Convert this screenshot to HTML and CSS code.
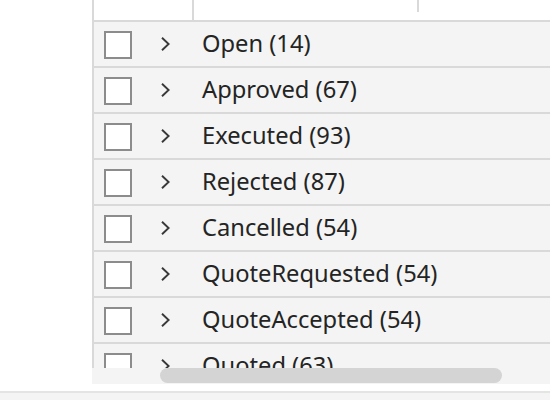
FILE: index.html
```html
<!DOCTYPE html>
<html>
<head>
<meta charset="utf-8">
<link rel="stylesheet" href="styles.css">
</head>
<body>
<div class="page">
  <div class="grid">
    <div class="header">
      <div class="hcell hcell-first"></div>
      <div class="hcell hcell-second"></div>
      <div class="hcell hcell-rest"></div>
    </div>
    <div class="body">
      <div class="row"><span class="check"></span><span class="chev"><svg width="11" height="14" viewBox="0 0 11 14"><path d="M2 0.8 L8.6 7 L2 13.2" fill="none" stroke="#383838" stroke-width="1.9"/></svg></span><span class="label">Open (14)</span></div>
      <div class="row"><span class="check"></span><span class="chev"><svg width="11" height="14" viewBox="0 0 11 14"><path d="M2 0.8 L8.6 7 L2 13.2" fill="none" stroke="#383838" stroke-width="1.9"/></svg></span><span class="label">Approved (67)</span></div>
      <div class="row"><span class="check"></span><span class="chev"><svg width="11" height="14" viewBox="0 0 11 14"><path d="M2 0.8 L8.6 7 L2 13.2" fill="none" stroke="#383838" stroke-width="1.9"/></svg></span><span class="label">Executed (93)</span></div>
      <div class="row"><span class="check"></span><span class="chev"><svg width="11" height="14" viewBox="0 0 11 14"><path d="M2 0.8 L8.6 7 L2 13.2" fill="none" stroke="#383838" stroke-width="1.9"/></svg></span><span class="label">Rejected (87)</span></div>
      <div class="row"><span class="check"></span><span class="chev"><svg width="11" height="14" viewBox="0 0 11 14"><path d="M2 0.8 L8.6 7 L2 13.2" fill="none" stroke="#383838" stroke-width="1.9"/></svg></span><span class="label">Cancelled (54)</span></div>
      <div class="row"><span class="check"></span><span class="chev"><svg width="11" height="14" viewBox="0 0 11 14"><path d="M2 0.8 L8.6 7 L2 13.2" fill="none" stroke="#383838" stroke-width="1.9"/></svg></span><span class="label">QuoteRequested (54)</span></div>
      <div class="row"><span class="check"></span><span class="chev"><svg width="11" height="14" viewBox="0 0 11 14"><path d="M2 0.8 L8.6 7 L2 13.2" fill="none" stroke="#383838" stroke-width="1.9"/></svg></span><span class="label">QuoteAccepted (54)</span></div>
      <div class="row"><span class="check"></span><span class="chev"><svg width="11" height="14" viewBox="0 0 11 14"><path d="M2 0.8 L8.6 7 L2 13.2" fill="none" stroke="#383838" stroke-width="1.9"/></svg></span><span class="label">Quoted (63)</span></div>
    </div>
  </div>
  <div class="hscroll"><div class="thumb"></div></div>
</div>
<div class="gap"></div>
<div class="footer"></div>
</body>
</html>
```
FILE: styles.css
```css
html, body {
  margin: 0;
  padding: 0;
  background: #ffffff;
  font-family: "Noto Sans", "Open Sans", sans-serif;
  color: #242424;
  overflow: hidden;
}
.page {
  margin-left: 92px;
  width: 458px;
}
.grid {
  border-left: 2px solid #d9d9d9;
}
.header {
  display: flex;
  height: 20px;
  background: #ffffff;
  border-bottom: 2px solid #d9d9d9;
}
.hcell-first {
  width: 98px;
  border-right: 2px solid #d9d9d9;
}
.hcell-second {
  width: 223px;
  height: 12px;
  border-right: 2px solid #d9d9d9;
}
.body {
  height: 346px;
  overflow: hidden;
  background: #f3f4f3;
}
.row {
  display: flex;
  align-items: center;
  height: 44px;
  border-bottom: 2px solid #d9d9d9;
  padding-left: 10px;
  background: #f3f4f3;
}
.check {
  box-sizing: border-box;
  width: 28px;
  height: 28px;
  border: 2px solid #8c8c8c;
  background: #ffffff;
  margin-top: 2px;
}
.chev {
  display: flex;
  align-items: center;
  width: 70px;
  padding-left: 28px;
  box-sizing: border-box;
  margin-top: -1px;
}
.label {
  font-size: 23.7px;
  line-height: 30px;
  white-space: nowrap;
  margin-top: -2px;
}
.hscroll {
  height: 16px;
  background: #f3f4f3;
}
.thumb {
  margin-left: 68px;
  width: 342px;
  height: 15px;
  border-radius: 8px;
  background: #d4d4d4;
}
.gap {
  height: 7px;
}
.footer {
  height: 9px;
  border-top: 2px solid #e3e5e3;
  background: #f3f4f3;
}
```
